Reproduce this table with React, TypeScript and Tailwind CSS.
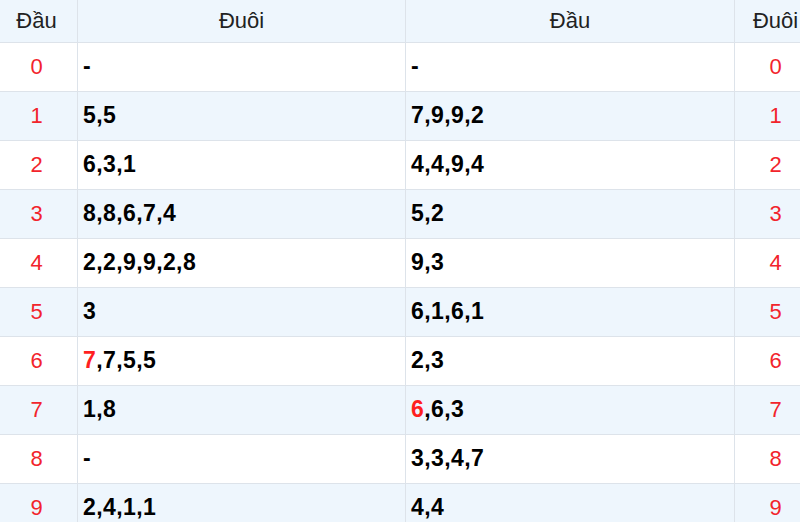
import React from 'react';

type Part = { v: string; hot?: boolean };

const rows: { tail: Part[]; head: Part[] }[] = [
  { tail: [{ v: '-' }], head: [{ v: '-' }] },
  { tail: [{ v: '5,5' }], head: [{ v: '7,9,9,2' }] },
  { tail: [{ v: '6,3,1' }], head: [{ v: '4,4,9,4' }] },
  { tail: [{ v: '8,8,6,7,4' }], head: [{ v: '5,2' }] },
  { tail: [{ v: '2,2,9,9,2,8' }], head: [{ v: '9,3' }] },
  { tail: [{ v: '3' }], head: [{ v: '6,1,6,1' }] },
  { tail: [{ v: '7', hot: true }, { v: ',7,5,5' }], head: [{ v: '2,3' }] },
  { tail: [{ v: '1,8' }], head: [{ v: '6', hot: true }, { v: ',6,3' }] },
  { tail: [{ v: '-' }], head: [{ v: '3,3,4,7' }] },
  { tail: [{ v: '2,4,1,1' }], head: [{ v: '4,4' }] },
];

const Values = ({ parts }: { parts: Part[] }) => (
  <>
    {parts.map((p, i) => (
      <span key={i} className={p.hot ? 'text-[#ff1f1f]' : ''}>
        {p.v}
      </span>
    ))}
  </>
);

export default function App() {
  return (
    <div className="w-[800px] h-[522px] overflow-hidden bg-white font-['Liberation_Sans',Arial,sans-serif]">
      {/* table is wider than the view, edge columns are cut */}
      <table className="table-fixed border-collapse w-[821px] ml-[-5px]">
        <colgroup>
          <col className="w-[82px]" />
          <col className="w-[328px]" />
          <col className="w-[329px]" />
          <col className="w-[82px]" />
        </colgroup>
        <thead>
          <tr className="h-[42px] bg-[#eef6fd] text-[22px] text-[#222]">
            <th className="border border-[#dde3ea] border-t-0 font-normal text-center">Đầu</th>
            <th className="border border-[#dde3ea] border-t-0 font-normal text-center">Đuôi</th>
            <th className="border border-[#dde3ea] border-t-0 font-normal text-center">Đầu</th>
            <th className="border border-[#dde3ea] border-t-0 font-normal text-center">Đuôi</th>
          </tr>
        </thead>
        <tbody>
          {rows.map((r, i) => (
            <tr key={i} className={`h-[49px] ${i % 2 === 1 ? 'bg-[#eef6fd]' : 'bg-white'}`}>
              <td className="border border-[#dde3ea] text-center text-[22px] text-[#f2242c]">{i}</td>
              <td className="border border-[#dde3ea] pl-[5px] text-[23px] tracking-[0.4px] font-bold text-black">
                <Values parts={r.tail} />
              </td>
              <td className="border border-[#dde3ea] pl-[5px] text-[23px] tracking-[0.4px] font-bold text-black">
                <Values parts={r.head} />
              </td>
              <td className="border border-[#dde3ea] text-center text-[22px] text-[#f2242c]">{i}</td>
            </tr>
          ))}
        </tbody>
      </table>
    </div>
  );
}
